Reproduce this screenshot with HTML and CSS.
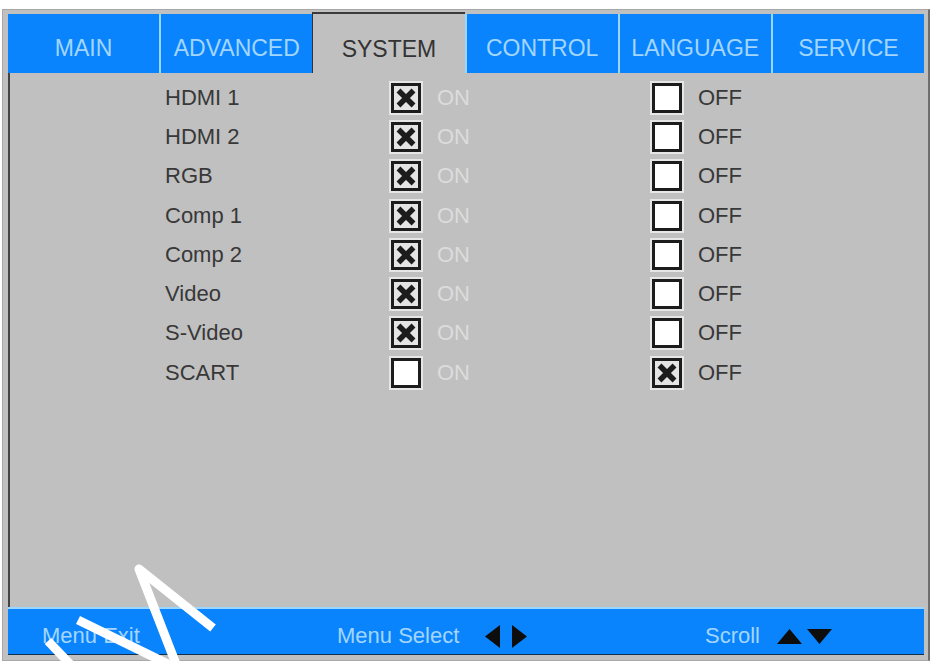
FILE: index.html
```html
<!DOCTYPE html>
<html lang="en">
<head>
    <meta charset="UTF-8">
    <meta name="viewport" content="width=device-width, initial-scale=1.0">
    <title>System</title>
    <link rel="stylesheet" href="styles.css">
</head>
<body>
    <div class="osd">
        <div class="tabs">
            <div class="tab">MAIN</div>
            <div class="tab">ADVANCED</div>
            <div class="tab active">SYSTEM</div>
            <div class="tab">CONTROL</div>
            <div class="tab">LANGUAGE</div>
            <div class="tab">SERVICE</div>
        </div>

        <div class="content">
            <div class="grid" id="grid"></div>
        </div>

        <div class="footer">
            <div class="hint">Menu Exit</div>
            <div class="hint">
                Menu Select
                <span class="keys lr">
                    <svg width="15" height="23" viewBox="0 0 15 23"><polygon points="15,0 15,23 0,11.5" /></svg>
                    <svg width="15" height="23" viewBox="0 0 15 23"><polygon points="0,0 0,23 15,11.5" /></svg>
                </span>
            </div>
            <div class="hint">
                Scroll
                <span class="keys ud">
                    <svg width="25" height="15" viewBox="0 0 25 15"><polygon points="0,15 25,15 12.5,0" /></svg>
                    <svg width="25" height="15" viewBox="0 0 25 15"><polygon points="0,0 25,0 12.5,15" /></svg>
                </span>
            </div>
        </div>
    </div>

    <svg class="scribble" width="932" height="662" viewBox="0 0 932 662">
        <polyline points="48,641 70,664" />
        <polyline points="78,620 168,664" />
        <polyline points="176,664 139,569 213,628" />
    </svg>

    <script>
        let sources = [
            ["HDMI 1", true],
            ["HDMI 2", true],
            ["RGB", true],
            ["Comp 1", true],
            ["Comp 2", true],
            ["Video", true],
            ["S-Video", true],
            ["SCART", false]
        ];

        let cross = '<svg width="24" height="24" viewBox="0 0 24 24"><path d="M4.5 4.5L19.5 19.5M19.5 4.5L4.5 19.5" /></svg>';

        function box(checked) {
            return '<span class="box' + (checked ? ' checked' : '') + '">' + (checked ? cross : '') + '</span>';
        }

        let grid = document.getElementById("grid");
        let html = "";
        for (let i = 0; i < sources.length; i++) {
            let on = sources[i][1];
            html += '<div class="label">' + sources[i][0] + '</div>';
            html += '<div class="opt">' + box(on) + '<span class="dim">ON</span></div>';
            html += '<div class="opt">' + box(!on) + '<span>OFF</span></div>';
        }
        grid.innerHTML = html;
    </script>
</body>
</html>
```

FILE: styles.css
```css
body {
    margin: 0;
    background-color: #fff;
    font-family: "Liberation Sans", Arial, sans-serif;
}

.osd {
    margin: 9px 2px 0 2px;
    padding: 4px 4px 5px 5px;
    background-color: #c0c0c0;
    border: 1px solid #a8a8a8;
    border-right: 2px solid #6e6e6e;
}

.tabs {
    display: flex;
    height: 59px;
}

.tab {
    flex: 1;
    display: flex;
    align-items: center;
    justify-content: center;
    padding-top: 9px;
    box-sizing: border-box;
    background-color: #0a84fc;
    color: #a2d6ff;
    font-size: 23px;
    border-left: 2px solid #9ad6ff;
}

.tab:first-child {
    border-left: none;
}

.tab.active {
    background-color: #c0c0c0;
    color: #333;
    border-left: 1px solid #333;
    border-top: 2px solid #3a3a3a;
    margin-top: -2px;
    height: 61px;
    padding-top: 11px;
}

.content {
    height: 534px;
    box-sizing: border-box;
    border-left: 2px solid #444;
    padding: 5px 0 0 155px;
}

.grid {
    display: grid;
    grid-template-columns: 224px 261px 1fr;
    grid-auto-rows: 39.3px;
    align-items: center;
    font-size: 22px;
    color: #383838;
}

.opt {
    display: flex;
    align-items: center;
    gap: 16px;
}

.dim {
    color: #dcdcdc;
}

.box {
    width: 30px;
    height: 30px;
    margin-left: 2px;
    box-sizing: border-box;
    border: 3px solid #1c1c1c;
    background-color: #fff;
    box-shadow: 0 0 0 2px #e6e6e6;
    display: flex;
    align-items: center;
    justify-content: center;
}

.box.checked {
    background-color: #e4e4e4;
}

.box svg path {
    stroke: #1c1c1c;
    stroke-width: 5.5;
}

.footer {
    height: 48px;
    box-sizing: border-box;
    background-color: #0a84fc;
    border-top: 2px solid #9ad6ff;
    border-bottom: 1px solid #10304c;
    padding: 9px 0 0 34px;
    display: grid;
    grid-template-columns: 295px 368px auto;
    align-items: center;
    color: #a2d6ff;
    font-size: 22px;
}

.hint {
    display: flex;
    align-items: center;
}

.keys {
    display: flex;
    align-items: center;
}

.keys polygon {
    fill: #0d0d0d;
}

.lr {
    margin-left: 26px;
    gap: 12px;
}

.ud {
    margin-left: 17px;
    gap: 5px;
}

.scribble {
    position: absolute;
    left: 0;
    top: 0;
    pointer-events: none;
}

.scribble polyline {
    fill: none;
    stroke: #fff;
    stroke-width: 9;
    stroke-linejoin: round;
}
```
